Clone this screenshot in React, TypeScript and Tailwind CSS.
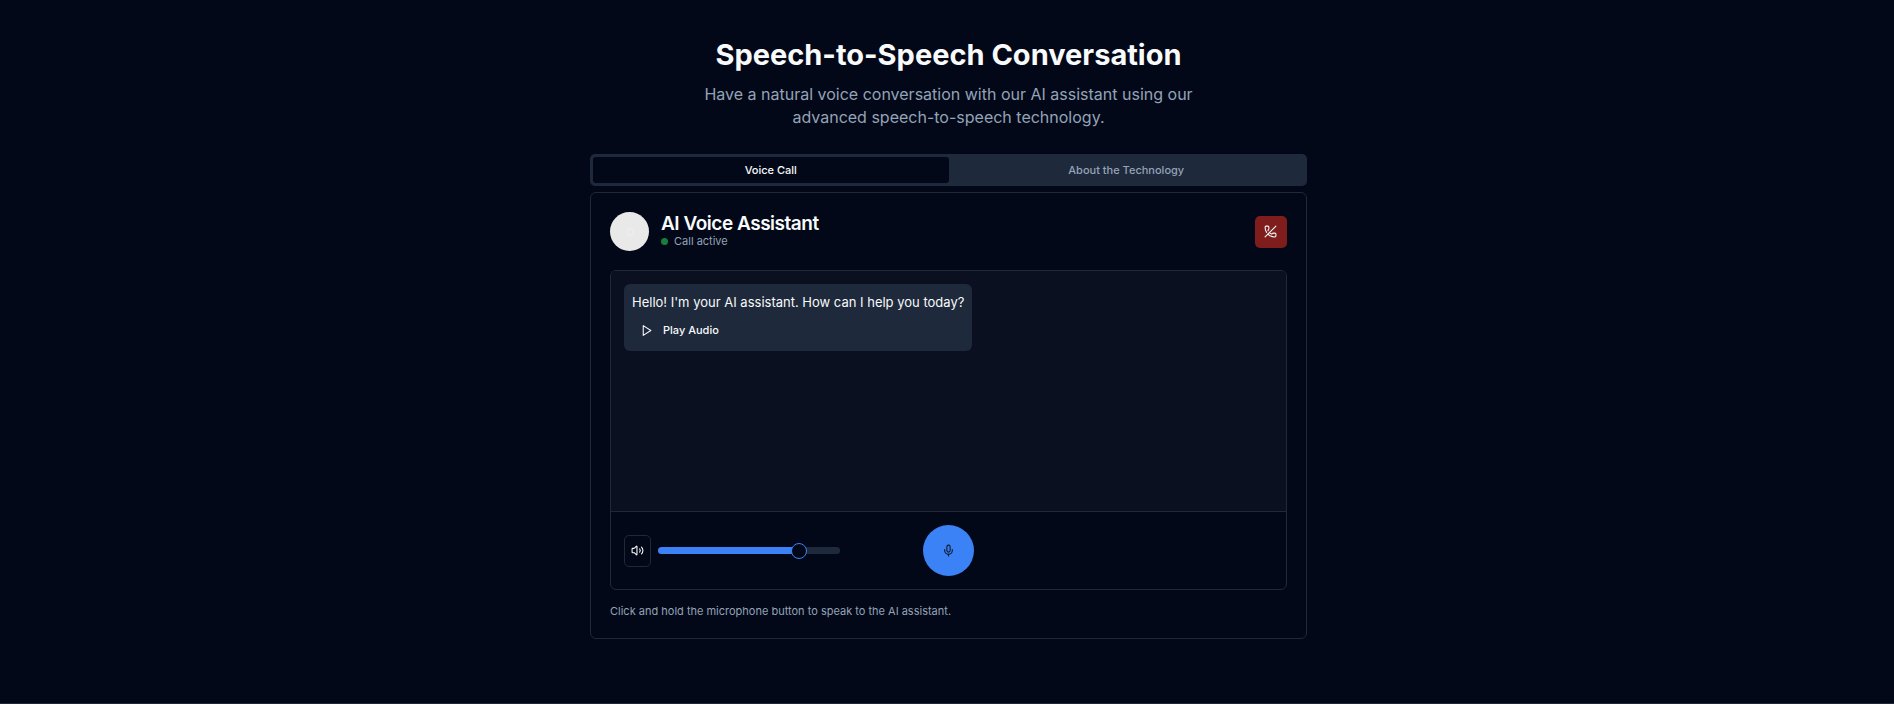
import { useState } from "react";
import { Mic, Volume2 } from "lucide-react";

function PhoneOffIcon() {
  return (
    <svg
      viewBox="0 0 24 24"
      fill="none"
      stroke="currentColor"
      strokeWidth="2"
      strokeLinecap="round"
      strokeLinejoin="round"
      className="size-[13px]"
      aria-hidden="true"
    >
      <path d="M10.1 13.9a14 14 0 0 0 3.732 2.668 1 1 0 0 0 1.213-.303l.355-.465A2 2 0 0 1 17 15h3a2 2 0 0 1 2 2v3a2 2 0 0 1-2 2 18 18 0 0 1-12.728-5.272" />
      <path d="M22 2 2 22" />
      <path d="M4.76 13.582A18 18 0 0 1 2 4a2 2 0 0 1 2-2h3a2 2 0 0 1 2 2v3a2 2 0 0 1-.8 1.6l-.468.351a1 1 0 0 0-.292 1.233 14 14 0 0 0 .244.473" />
    </svg>
  );
}

function PlayIcon() {
  return (
    <svg
      viewBox="0 0 24 24"
      fill="none"
      stroke="currentColor"
      strokeWidth="2"
      strokeLinecap="round"
      strokeLinejoin="round"
      className="size-[13px]"
      aria-hidden="true"
    >
      <polygon points="6 3 20 12 6 21 6 3" />
    </svg>
  );
}

function PageHeading() {
  return (
    <header className="flex flex-col items-center gap-3 text-center">
      <h1 className="text-[29px] leading-8 font-bold">Speech-to-Speech Conversation</h1>
      <p className="max-w-[560px] text-base leading-[23px] text-[#94a3b8]">
        Have a natural voice conversation with our AI assistant using our advanced speech-to-speech technology.
      </p>
    </header>
  );
}

function TabBar() {
  return (
    <div role="tablist" className="grid h-8 grid-cols-2 rounded-[5px] bg-[#1e293b] p-[3px] text-[11px] font-medium">
      <button role="tab" aria-selected="true" className="rounded-[3px] bg-[#020817]">
        Voice Call
      </button>
      <button role="tab" aria-selected="false" className="rounded-[3px] text-[#94a3b8]">
        About the Technology
      </button>
    </div>
  );
}

function CallHeader() {
  return (
    <div className="flex items-center justify-between">
      <div className="flex items-center gap-3">
        <div className="flex size-[39px] items-center justify-center rounded-full bg-[#e9e9e9]">
          <span className="size-2 rounded-full border border-[#f0f0f0]" />
        </div>
        <div>
          <h2 className="text-[19px] leading-[19px] font-semibold tracking-tight">AI Voice Assistant</h2>
          <p className="flex items-center gap-[6px] text-[11px] leading-4 text-[#94a3b8]">
            <span className="size-[7px] rounded-full bg-[#15803d]" />
            Call active
          </p>
        </div>
      </div>
      <button
        aria-label="End call"
        className="flex size-8 items-center justify-center rounded-[5px] bg-[#7f1d1d] pr-px pb-px"
      >
        <PhoneOffIcon />
      </button>
    </div>
  );
}

function Conversation() {
  return (
    <div className="flex h-[240px] items-start bg-[#0a101f] p-[13px]">
      <div className="rounded-md bg-[#1e293b] px-2 pt-[10px] pb-[9px]">
        <p className="text-[13px] leading-4">Hello! I'm your AI assistant. How can I help you today?</p>
        <button className="mt-[9px] flex h-[23px] items-center gap-[10px] px-2 text-[11px] font-medium">
          <PlayIcon />
          Play Audio
        </button>
      </div>
    </div>
  );
}

function Controls() {
  const [volume, setVolume] = useState(80);
  return (
    <div className="grid grid-cols-[1fr_auto_1fr] items-center border-t border-[#1e293b] p-[13px]">
      <div className="flex items-center gap-[7px]">
        <button
          aria-label="Mute"
          className="flex h-8 w-[27px] items-center justify-center rounded-[5px] border border-[#1e293b]"
        >
          <Volume2 className="size-[13px]" aria-hidden="true" />
        </button>
        <input
          type="range"
          aria-label="Volume"
          min={0}
          max={100}
          value={volume}
          onChange={(event) => setVolume(Number(event.target.value))}
          style={{ backgroundImage: `linear-gradient(to right, #3b82f6 ${volume}%, #1e293b ${volume}%)` }}
          className="h-[7px] w-[182px] appearance-none rounded-full [&::-webkit-slider-thumb]:size-4 [&::-webkit-slider-thumb]:appearance-none [&::-webkit-slider-thumb]:rounded-full [&::-webkit-slider-thumb]:border [&::-webkit-slider-thumb]:border-[#3b82f6] [&::-webkit-slider-thumb]:bg-[#020817]"
        />
      </div>
      <button
        aria-label="Hold to speak"
        className="flex size-[51px] items-center justify-center rounded-full bg-[#3b82f6] text-[#0f172a]"
      >
        <Mic className="size-[13px]" aria-hidden="true" />
      </button>
    </div>
  );
}

export default function App() {
  return (
    <div className="flex min-h-screen flex-col border-b border-[#1e293b] bg-[#020817] pl-[3px] font-[Inter,sans-serif] text-[#f8fafc]">
      <main className="mx-auto w-full max-w-[717px] pt-[39px] pb-12">
        <PageHeading />
        <div className="mt-[25px]">
          <TabBar />
          <section className="mt-[6px] rounded-md border border-[#1e293b] p-[19px]">
            <CallHeader />
            <div className="mt-[19px] overflow-hidden rounded-md border border-[#1e293b]">
              <Conversation />
              <Controls />
            </div>
            <p className="mt-[13px] text-[11px] leading-4 text-[#94a3b8]">
              Click and hold the microphone button to speak to the AI assistant.
            </p>
          </section>
        </div>
      </main>
    </div>
  );
}
